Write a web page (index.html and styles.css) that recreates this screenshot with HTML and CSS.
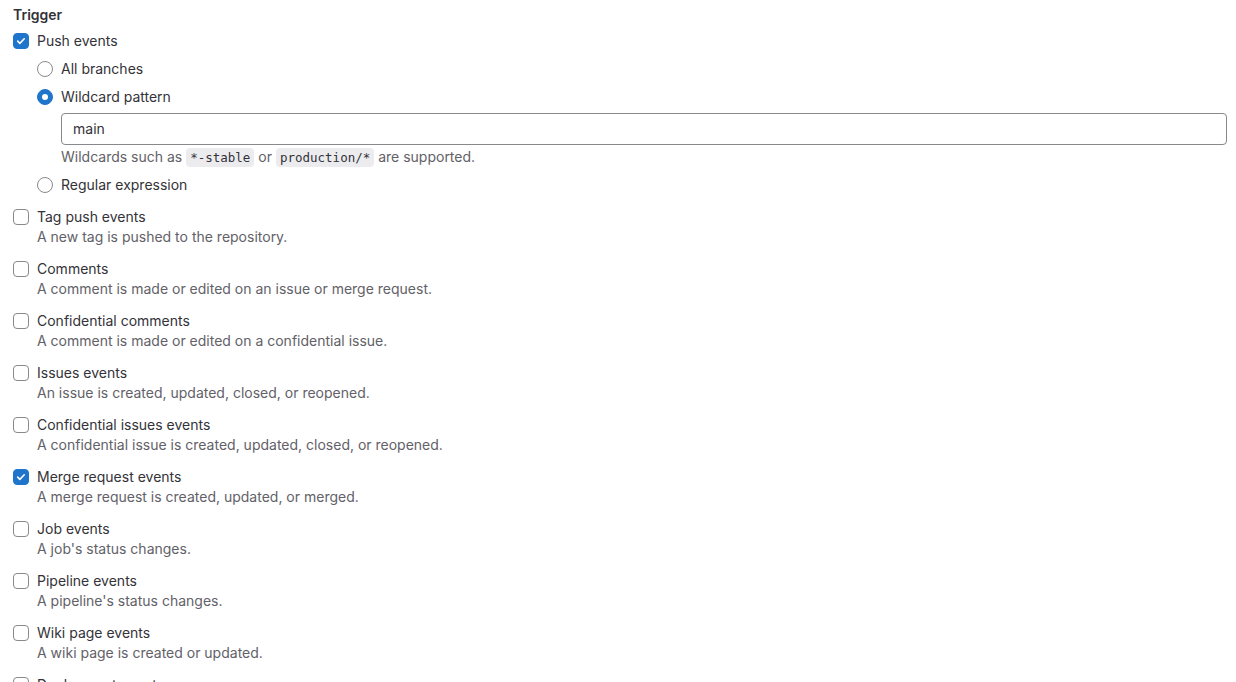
FILE: index.html
```html
<!DOCTYPE html>
<html>
<head>
<meta charset="utf-8">
<link rel="stylesheet" href="styles.css">
</head>
<body>
<div class="form">
  <div class="heading">Trigger</div>

  <div class="item">
    <div class="row"><span class="cb checked"><svg viewBox="0 0 16 16" width="16" height="16"><path d="M4.2 8.2l2.5 2.5 5-5.2" fill="none" stroke="#fff" stroke-width="1.8" stroke-linecap="round" stroke-linejoin="round"/></svg></span><span class="label">Push events</span></div>
    <div class="radios">
      <div class="row"><span class="radio"></span><span class="label">All branches</span></div>
      <div class="row"><span class="radio checked"></span><span class="label">Wildcard pattern</span></div>
      <div class="pattern">
        <div class="input">main</div>
        <div class="help">Wildcards such as <code>*-stable</code> or <code>production/*</code> are supported.</div>
      </div>
      <div class="row"><span class="radio"></span><span class="label">Regular expression</span></div>
    </div>
  </div>

  <div class="item">
    <div class="row"><span class="cb"></span><span class="label">Tag push events</span></div>
    <div class="desc">A new tag is pushed to the repository.</div>
  </div>
  <div class="item">
    <div class="row"><span class="cb"></span><span class="label">Comments</span></div>
    <div class="desc">A comment is made or edited on an issue or merge request.</div>
  </div>
  <div class="item">
    <div class="row"><span class="cb"></span><span class="label">Confidential comments</span></div>
    <div class="desc">A comment is made or edited on a confidential issue.</div>
  </div>
  <div class="item">
    <div class="row"><span class="cb"></span><span class="label">Issues events</span></div>
    <div class="desc">An issue is created, updated, closed, or reopened.</div>
  </div>
  <div class="item">
    <div class="row"><span class="cb"></span><span class="label">Confidential issues events</span></div>
    <div class="desc">A confidential issue is created, updated, closed, or reopened.</div>
  </div>
  <div class="item">
    <div class="row"><span class="cb checked"><svg viewBox="0 0 16 16" width="16" height="16"><path d="M4.2 8.2l2.5 2.5 5-5.2" fill="none" stroke="#fff" stroke-width="1.8" stroke-linecap="round" stroke-linejoin="round"/></svg></span><span class="label">Merge request events</span></div>
    <div class="desc">A merge request is created, updated, or merged.</div>
  </div>
  <div class="item">
    <div class="row"><span class="cb"></span><span class="label">Job events</span></div>
    <div class="desc">A job's status changes.</div>
  </div>
  <div class="item">
    <div class="row"><span class="cb"></span><span class="label">Pipeline events</span></div>
    <div class="desc">A pipeline's status changes.</div>
  </div>
  <div class="item">
    <div class="row"><span class="cb"></span><span class="label">Wiki page events</span></div>
    <div class="desc">A wiki page is created or updated.</div>
  </div>
  <div class="item">
    <div class="row"><span class="cb"></span><span class="label">Deployment events</span></div>
    <div class="desc">A deployment starts, finishes, fails, or is canceled.</div>
  </div>
</div>
</body>
</html>
```

FILE: styles.css
```css
html, body {
  margin: 0;
  padding: 0;
  background: #fff;
  overflow: hidden;
}
body {
  font-family: Inter, "Noto Sans", sans-serif;
  font-size: 14px;
  line-height: 20px;
  color: #333238;
}
.form {
  padding: 5px 9px 0 13px;
}
.heading {
  font-weight: 600;
  margin-bottom: 6px;
}
.item {
  margin-bottom: 12px;
}
.row {
  display: flex;
  align-items: center;
  height: 20px;
}
.label {
  margin-left: 8px;
}
.desc {
  padding-left: 24px;
  color: #626168;
}
.cb {
  box-sizing: border-box;
  width: 16px;
  height: 16px;
  border: 1px solid #89888d;
  border-radius: 4px;
  background: #fff;
  display: flex;
  align-items: center;
  justify-content: center;
  flex: none;
}
.cb.checked {
  background: #1f75cb;
  border-color: #1f75cb;
}
.cb svg {
  display: block;
}
.radios {
  padding-left: 24px;
  padding-top: 8px;
  display: flex;
  flex-direction: column;
  gap: 8px;
}
.radio {
  box-sizing: border-box;
  width: 16px;
  height: 16px;
  border: 1px solid #89888d;
  border-radius: 50%;
  background: #fff;
  flex: none;
  display: flex;
  align-items: center;
  justify-content: center;
}
.radio.checked {
  background: #1f75cb;
  border-color: #1f75cb;
}
.radio.checked::after {
  content: "";
  width: 6px;
  height: 6px;
  border-radius: 50%;
  background: #fff;
}
.pattern {
  padding-left: 24px;
  margin-top: -2px;
}
.input {
  box-sizing: border-box;
  height: 32px;
  border: 1px solid #89888d;
  border-radius: 4px;
  padding: 5px 11px;
  color: #333238;
}
.help {
  margin-top: 2px;
  height: 20px;
  color: #626168;
}
code {
  font-family: "DejaVu Sans Mono", "Liberation Mono", monospace;
  font-size: 12.5px;
  line-height: 16px;
  background: #ececef;
  color: #333238;
  border-radius: 4px;
  padding: 2px 4px;
}
```
